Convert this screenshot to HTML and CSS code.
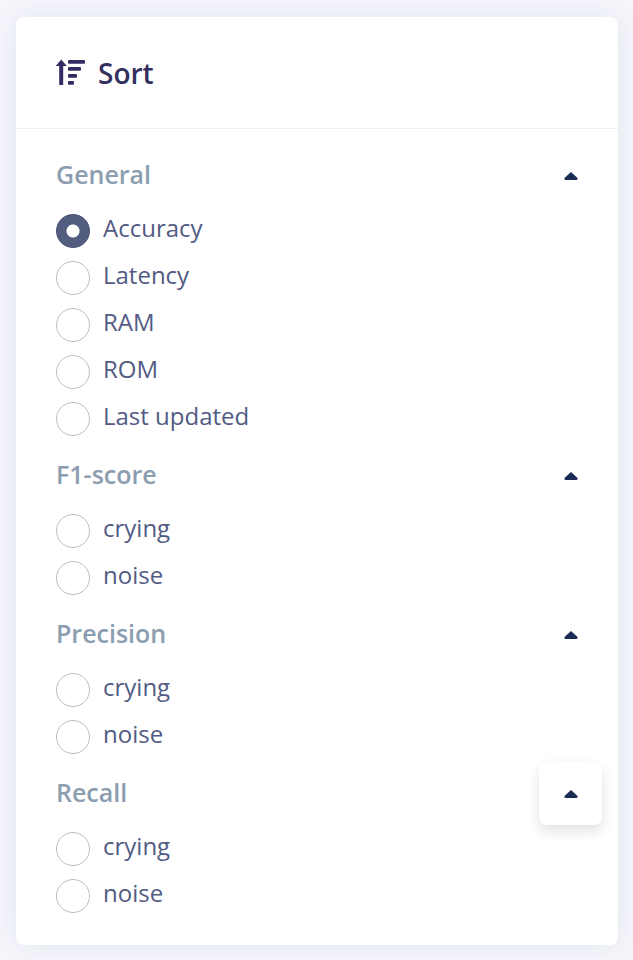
FILE: index.html
```html
<!DOCTYPE html>
<html lang="en">
<head>
  <meta charset="UTF-8" />
  <meta name="viewport" content="width=device-width, initial-scale=1.0"/>
  <title>Sort</title>
  <link rel="stylesheet" href="styles.css">
</head>
<body>
  <form class="card">
    <header class="card-header">
      <svg class="sort-icon" viewBox="0 0 30 28" aria-hidden="true">
        <path d="M5.200 0.500 L10.800 7 H7.200 V26 H3.200 V7 H-0.200 Z"/>
        <rect x="12" y="1" width="17" height="3.800" rx="1"/>
        <rect x="12" y="8" width="13" height="3.800" rx="1"/>
        <rect x="12" y="15" width="9" height="3.800" rx="1"/>
        <rect x="12" y="22" width="6" height="3.800" rx="1"/>
      </svg>
      <h1>Sort</h1>
    </header>

    <div class="card-body">
      <section class="group">
        <div class="group-header">
          <h2>General</h2>
          <button type="button" class="toggle" aria-label="Collapse General">
            <svg class="arrow" viewBox="0 0 14 8"><path d="M7 0 L13.500 6 Q14 8 12.500 8 H1.500 Q0 8 0.500 6 Z"/></svg>
          </button>
        </div>
        <label class="option"><input type="radio" name="sort" value="accuracy" checked><span>Accuracy</span></label>
        <label class="option"><input type="radio" name="sort" value="latency"><span>Latency</span></label>
        <label class="option"><input type="radio" name="sort" value="ram"><span>RAM</span></label>
        <label class="option"><input type="radio" name="sort" value="rom"><span>ROM</span></label>
        <label class="option"><input type="radio" name="sort" value="updated"><span>Last updated</span></label>
      </section>

      <section class="group">
        <div class="group-header">
          <h2>F1-score</h2>
          <button type="button" class="toggle" aria-label="Collapse F1-score">
            <svg class="arrow" viewBox="0 0 14 8"><path d="M7 0 L13.500 6 Q14 8 12.500 8 H1.500 Q0 8 0.500 6 Z"/></svg>
          </button>
        </div>
        <label class="option"><input type="radio" name="sort" value="f1-crying"><span>crying</span></label>
        <label class="option"><input type="radio" name="sort" value="f1-noise"><span>noise</span></label>
      </section>

      <section class="group">
        <div class="group-header">
          <h2>Precision</h2>
          <button type="button" class="toggle" aria-label="Collapse Precision">
            <svg class="arrow" viewBox="0 0 14 8"><path d="M7 0 L13.500 6 Q14 8 12.500 8 H1.500 Q0 8 0.500 6 Z"/></svg>
          </button>
        </div>
        <label class="option"><input type="radio" name="sort" value="precision-crying"><span>crying</span></label>
        <label class="option"><input type="radio" name="sort" value="precision-noise"><span>noise</span></label>
      </section>

      <section class="group">
        <div class="group-header">
          <h2>Recall</h2>
          <button type="button" class="toggle raised" aria-label="Collapse Recall">
            <svg class="arrow" viewBox="0 0 14 8"><path d="M7 0 L13.500 6 Q14 8 12.500 8 H1.500 Q0 8 0.500 6 Z"/></svg>
          </button>
        </div>
        <label class="option"><input type="radio" name="sort" value="recall-crying"><span>crying</span></label>
        <label class="option"><input type="radio" name="sort" value="recall-noise"><span>noise</span></label>
      </section>
    </div>
  </form>
</body>
</html>
```
FILE: styles.css
```css
* {
  box-sizing: border-box;
}

body {
  margin: 0;
  padding: 17px 15px 15px 16px;
  font-family: "Open Sans", sans-serif;
  background-color: #f6f7fd;
}

.card {
  background-color: #fff;
  border-radius: 8px;
  box-shadow: 0 0 32px rgba(50, 70, 90, 0.1);
}

.card-header {
  display: flex;
  align-items: center;
  gap: 12px;
  height: 112px;
  padding: 0 40px;
  border-bottom: 1px solid #edeff3;
}

.sort-icon {
  width: 30px;
  height: 28px;
  fill: #332c63;
  overflow: visible;
}

h1 {
  margin: 0;
  font-size: 28px;
  font-weight: 600;
  color: #332f60;
}

.card-body {
  padding: 15px 16px 24px 40px;
}

.group {
  margin-bottom: 2px;
}

.group-header {
  display: flex;
  align-items: center;
  justify-content: space-between;
}

h2 {
  margin: 0;
  padding-bottom: 3px;
  font-size: 25px;
  font-weight: 600;
  color: #8c9db0;
}

.toggle {
  display: flex;
  align-items: center;
  justify-content: center;
  width: 63px;
  height: 63px;
  padding: 0;
  background-color: #fff;
  border: none;
  border-radius: 8px;
  cursor: pointer;
}

.toggle.raised {
  box-shadow: 0 6px 14px rgba(0, 0, 0, 0.12);
}

.arrow {
  width: 14px;
  height: 8px;
  fill: #182c54;
}

.option {
  display: flex;
  align-items: center;
  gap: 13px;
  height: 47px;
  font-size: 24px;
  color: #525b83;
  cursor: pointer;
}

.option span {
  padding-bottom: 6px;
}

.option input {
  appearance: none;
  flex: none;
  width: 34px;
  height: 34px;
  margin: 0;
  background-color: #fff;
  border: 1px solid #b8bfc3;
  border-radius: 50%;
  cursor: pointer;
}

.option input:checked {
  background: radial-gradient(circle, #fff 6px, #525d80 7px);
  border-color: #464e72;
}
```
